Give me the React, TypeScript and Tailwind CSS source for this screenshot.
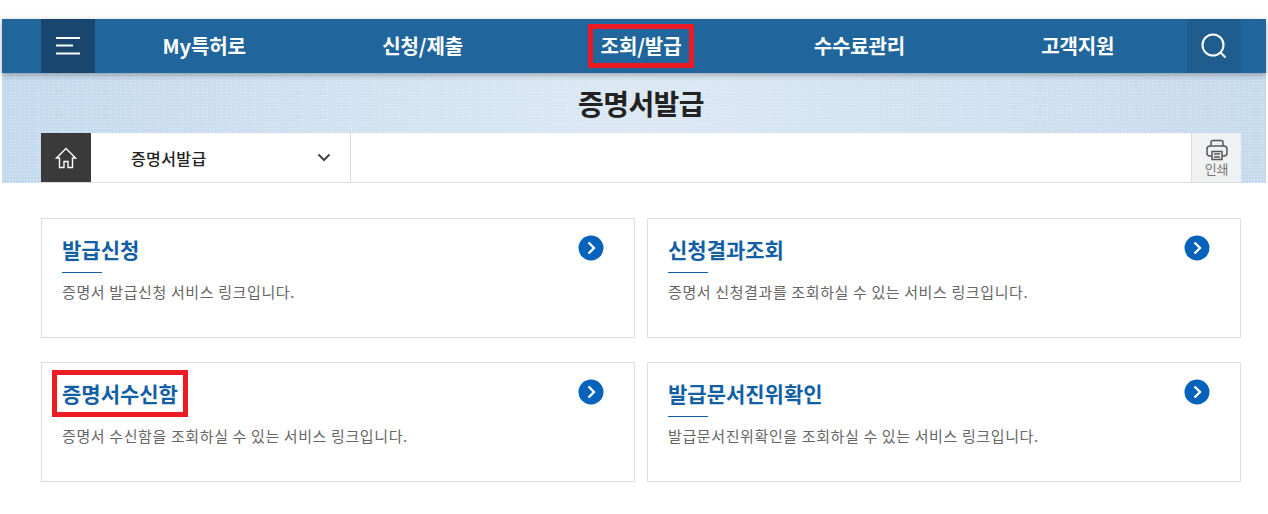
const font = "font-['Noto_Sans_CJK_KR','Noto_Sans',sans-serif]";

const navItems = ["My특허로", "신청/제출", "조회/발급", "수수료관리", "고객지원"];

const cards = [
  { title: "발급신청", desc: "증명서 발급신청 서비스 링크입니다.", marked: false },
  { title: "신청결과조회", desc: "증명서 신청결과를 조회하실 수 있는 서비스 링크입니다.", marked: false },
  { title: "증명서수신함", desc: "증명서 수신함을 조회하실 수 있는 서비스 링크입니다.", marked: true },
  { title: "발급문서진위확인", desc: "발급문서진위확인을 조회하실 수 있는 서비스 링크입니다.", marked: false },
];

function ServiceCard({ title, desc, marked }: { title: string; desc: string; marked: boolean }) {
  return (
    <div className="relative h-[120px] border border-[#dddde6] bg-white pl-5 pr-[30px] pt-[14px]">
      <div className="flex items-start justify-between">
        <h2 className="relative text-[21px] leading-[32px] font-bold tracking-[0px] text-[#135fa6]">
          {title}
          {marked && (
            <span className="absolute -left-[10px] -top-[7px] z-10 h-[47px] w-[136px] border-[5px] border-[#ed1c24]" />
          )}
        </h2>
        <svg width="26" height="26" viewBox="0 0 26 26" className="mt-[2px]">
          <circle cx="13" cy="13" r="12.5" fill="#0563bb" />
          <path d="M10.5 7.5 16 13l-5.500 5.500" fill="none" stroke="#fff" strokeWidth="2.400" />
        </svg>
      </div>
      <div className="mt-[7px] h-px w-10 bg-[#135fa6]" />
      <p className="mt-[9px] text-[15px] leading-[20px] tracking-[0.62px] text-[#666]">{desc}</p>
    </div>
  );
}

export default function App() {
  return (
    <div className={`${font} h-[514px] w-[1268px] overflow-hidden bg-white pt-[19px]`}>
      <header className="relative z-10 mx-[2px] flex h-[54px] bg-[#20669c] pl-[39px] shadow-[0_2px_6px_rgba(0,0,0,0.3)]">
        <div className="flex w-[1200px]">
          <button className="flex w-[54px] items-center justify-center bg-[#18466f]">
            <svg width="24" height="18" viewBox="0 0 24 18">
              <path d="M0 1h24M0 8.500h17M0 16.500h24" stroke="#fff" strokeWidth="2" />
            </svg>
          </button>
          <nav className="flex flex-1">
            {navItems.map((item) => (
              <a key={item} className="relative flex flex-1 items-center justify-center text-[20px] font-bold tracking-[-0.1px] text-white">
                {item}
                {item === "조회/발급" && (
                  <span className="absolute left-1/2 top-[5px] h-[44px] w-[106px] -translate-x-1/2 border-[5px] border-[#ed1c24]" />
                )}
              </a>
            ))}
          </nav>
          <button className="flex w-[54px] items-center justify-center bg-[#1e5d8e]">
            <svg width="26" height="26" viewBox="0 0 26 26" fill="none" stroke="#fff" strokeWidth="2">
              <circle cx="12" cy="12" r="10.500" />
              <path d="m19.500 19.500 5 5" />
            </svg>
          </button>
        </div>
      </header>

      <section className="mx-[2px] flex h-[110px] flex-col bg-[image:radial-gradient(circle,#ffffff66_1px,transparent_1px),linear-gradient(90deg,#c3d9ed,#dbe8f4_50%,#c6daed)] bg-[size:3px_3px,100%_100%] pl-[39px]">
        <h1 className="flex h-[60px] w-[1200px] items-center justify-center text-[28px] font-bold tracking-[-0.6px] text-[#222]">증명서발급</h1>
        <div className="flex h-[50px] w-[1200px] border-b border-[#dcdcdc] bg-white">
          <div className="flex w-[50px] items-center justify-center bg-[#3a3a3a]">
            <svg width="22" height="22" viewBox="0 0 22 22" fill="none" stroke="#fff" strokeWidth="1.400">
              <path d="M1.500 11 11 1.500 20.500 11h-3v9.500h-4.500v-6h-4v6H4.500V11z" />
            </svg>
          </div>
          <div className="flex w-[260px] items-center justify-between border-r border-[#dcdcdc] pl-10 pr-[19px]">
            <span className="text-[16px] font-medium tracking-[0.4px] text-[#222]">증명서발급</span>
            <svg width="14" height="9" viewBox="0 0 14 9" fill="none" stroke="#444" strokeWidth="2">
              <path d="m1.500 1.500 5.500 5.500 5.500-5.500" />
            </svg>
          </div>
          <div className="flex-1" />
          <div className="flex w-[50px] flex-col items-center border-l border-[#dcdcdc] bg-[#f0f1f3] pt-[6px]">
            <svg width="22" height="22" viewBox="0 0 22 22" fill="none" stroke="#555" strokeWidth="1.500">
              <path d="M5 7V3.500A2 2 0 0 1 7 1.500h8a2 2 0 0 1 2 2V7" />
              <rect x="1" y="7" width="20" height="10" rx="3" />
              <path d="M6 20.500v-8h10v8z" fill="#f0f1f3" />
              <path d="M8 15h6M8 18h6" />
            </svg>
            <span className="text-[13px] leading-[16px] tracking-[-0.3px] text-[#777]">인쇄</span>
          </div>
        </div>
      </section>

      <main className="ml-[41px] mt-[35px] grid w-[1200px] grid-cols-2 gap-x-3 gap-y-6">
        {cards.map((card) => (
          <ServiceCard key={card.title} {...card} />
        ))}
      </main>
    </div>
  );
}
